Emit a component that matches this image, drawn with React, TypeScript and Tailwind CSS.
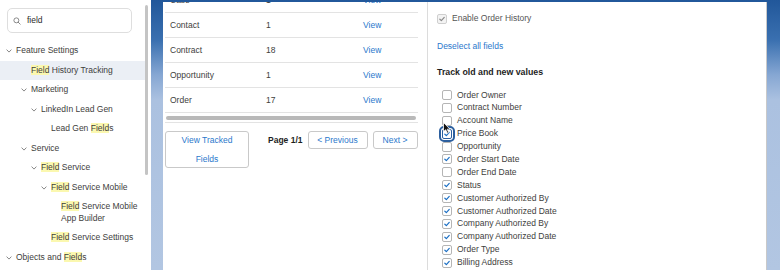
import clsx from "clsx";

const tree = [
  { label: "Feature Settings", pad: "pl-[6px]", chev: true },
  { label: "Field History Tracking", pad: "pl-[21px]", selected: true },
  { label: "Marketing", pad: "pl-[21px]", chev: true },
  { label: "LinkedIn Lead Gen", pad: "pl-[31px]", chev: true },
  { label: "Lead Gen Fields", pad: "pl-[41px]" },
  { label: "Service", pad: "pl-[21px]", chev: true },
  { label: "Field Service", pad: "pl-[31px]", chev: true },
  { label: "Field Service Mobile", pad: "pl-[41px]", chev: true },
  { label: "Field Service Mobile|App Builder", pad: "pl-[51px]" },
  { label: "Field Service Settings", pad: "pl-[41px]" },
  { label: "Objects and Fields", pad: "pl-[6px]", chev: true },
];

const rows = [
  { name: "Case", count: "1" },
  { name: "Contact", count: "1" },
  { name: "Contract", count: "18" },
  { name: "Opportunity", count: "1" },
  { name: "Order", count: "17" },
];

const fields = [
  { label: "Order Owner", checked: false },
  { label: "Contract Number", checked: false },
  { label: "Account Name", checked: false },
  { label: "Price Book", checked: true, focus: true },
  { label: "Opportunity", checked: false },
  { label: "Order Start Date", checked: true },
  { label: "Order End Date", checked: false },
  { label: "Status", checked: true },
  { label: "Customer Authorized By", checked: true },
  { label: "Customer Authorized Date", checked: true },
  { label: "Company Authorized By", checked: true },
  { label: "Company Authorized Date", checked: true },
  { label: "Order Type", checked: true },
  { label: "Billing Address", checked: true },
];

// wraps every "Field" in a yellow mark
function Highlight({ text }: { text: string }) {
  const parts = text.split("Field");
  return (
    <>
      {parts.map((p, i) => (
        <span key={i}>
          {i > 0 && <span className="bg-[#fbf8b0]">Field</span>}
          {p}
        </span>
      ))}
    </>
  );
}

function Chevron() {
  return (
    <svg width="6" height="4" viewBox="0 0 6 4" className="mt-[4px]">
      <path d="M0.6 0.6 L3 3.1 L5.4 0.6" fill="none" stroke="#7a7a7a" strokeWidth="0.9" />
    </svg>
  );
}

function Check({ color }: { color: string }) {
  return (
    <svg width="8" height="8" viewBox="0 0 10 10">
      <path d="M2.3 5.3 L4.2 7 L7.8 3" fill="none" stroke={color} strokeWidth="1.5" strokeLinecap="round" strokeLinejoin="round" />
    </svg>
  );
}

function Box({ checked, focus }: { checked?: boolean; focus?: boolean }) {
  return (
    <span
      className={clsx(
        "flex h-[10px] w-[10px] shrink-0 items-center justify-center rounded-[2px] border bg-white",
        focus ? "border-[#2c5f9e] outline-2 outline-offset-[1px] outline-[#2c5f9e]" : "border-[#b5b5b5]"
      )}
    >
      {checked && <Check color="#1b6fc4" />}
    </span>
  );
}

export default function App() {
  return (
    <div className="flex h-[270px] w-[780px] overflow-hidden bg-[linear-gradient(to_bottom,#21579a_0px,#3a70b0_40px,#86a7d3_75px,#abc1e0_100px,#b2c6e2_270px)] font-['Liberation_Sans',Arial,sans-serif] text-[8.5px] text-[#3e3e3c]">
      {/* sidebar */}
      <div className="flex w-[151px] shrink-0 bg-white">
        <div className="flex w-[145px] flex-col">
          <div className="ml-[7px] mt-[8px] flex h-[25px] w-[125px] items-center gap-[6px] rounded-[5px] border border-[#dedede] pl-[5px]">
            <svg width="8" height="8" viewBox="0 0 10 10">
              <circle cx="4.2" cy="4.2" r="3.1" fill="none" stroke="#6e6e6e" strokeWidth="1" />
              <path d="M6.5 6.5 L9 9" stroke="#6e6e6e" strokeWidth="1" strokeLinecap="round" />
            </svg>
            <span className="text-[#2b2b2b]">field</span>
          </div>
          <div className="mt-[8px] flex flex-col">
            {tree.map((n) => (
              <div
                key={n.label}
                className={clsx("flex py-[4px] leading-[11.5px]", n.pad, n.selected && "bg-[#ebeff5]")}
              >
                <span className="w-[10px] shrink-0">{n.chev && <Chevron />}</span>
                <span>
                  {n.label.split("|").map((l, i) => (
                    <span key={i} className="block">
                      <Highlight text={l} />
                    </span>
                  ))}
                </span>
              </div>
            ))}
          </div>
        </div>
        <div className="w-[4px] pt-[5px]">
          <div className="h-[170px] w-[3px] rounded-full bg-[#c4c4c4]" />
        </div>
      </div>

      {/* main panel */}
      <div className="ml-[12px] mt-[2px] flex w-[604px] shrink-0 border-r border-[#c9c9c9] bg-white">
        <div className="w-[265px] shrink-0 overflow-hidden border-r border-[#dcdcdc] pl-[2px] pr-[9px]">
          <div className="-mt-[14px]">
            {rows.map((r) => (
              <div key={r.name} className="flex h-[25px] items-center border-b border-[#e3e3e3] pl-[5px]">
                <span className="w-[96px]">{r.name}</span>
                <span className="w-[97px]">{r.count}</span>
                <span className="text-[#2a78cc]">View</span>
              </div>
            ))}
            <div className="border-b border-[#e3e3e3] pb-[2px] pl-[1px] pr-[2px] pt-[3px]">
              <div className="h-[4px] rounded-full bg-[#b9b9b9]" />
            </div>
          </div>
          <div className="mt-[8px] flex items-start">
            <button className="flex h-[37px] w-[84px] flex-col items-center justify-center rounded-[3px] border border-[#c9c9c9] leading-[19px] text-[#2a78cc]">
              <span>View Tracked</span>
              <span>Fields</span>
            </button>
            <span className="ml-[19px] h-[18px] font-bold leading-[18px] text-[#1e1e1e]">Page 1/1</span>
            <button className="ml-[5px] h-[18px] w-[60px] rounded-[3px] border border-[#c9c9c9] text-[#2a78cc]">
              &lt; Previous
            </button>
            <button className="ml-[5px] h-[18px] w-[45px] rounded-[3px] border border-[#c9c9c9] text-[#2a78cc]">
              Next &gt;
            </button>
          </div>
        </div>

        <div className="flex flex-1 flex-col pl-[9px]">
          <div className="mt-[11px] flex h-[11px] items-center gap-[5px] text-[#555]">
            <span className="flex h-[10px] w-[10px] items-center justify-center rounded-[2px] border border-[#cfcfcf] bg-[#f3f3f3]">
              <Check color="#8a8a8a" />
            </span>
            Enable Order History
          </div>
          <div className="mt-[16.5px] leading-[11px] text-[#2a78cc]">Deselect all fields</div>
          <div className="mt-[15px] text-[8.8px] font-bold leading-[11px] text-[#1e1e1e]">Track old and new values</div>
          <div className="relative mt-[11px] flex flex-col pl-[5px]">
            {fields.map((f) => (
              <div key={f.label} className="flex h-[12.9px] items-center gap-[5px]">
                <Box checked={f.checked} focus={f.focus} />
                <span>{f.label}</span>
              </div>
            ))}
            {/* mouse pointer */}
            <svg className="absolute left-[6px] top-[33px]" width="8" height="12" viewBox="0 0 8 12">
              <path d="M0.5 0.5 L0.5 9.6 L2.7 7.7 L4.3 11.2 L5.7 10.6 L4.2 7.2 L7 7.2 Z" fill="#111" stroke="#fff" strokeWidth="0.8" />
            </svg>
          </div>
        </div>
      </div>
    </div>
  );
}
